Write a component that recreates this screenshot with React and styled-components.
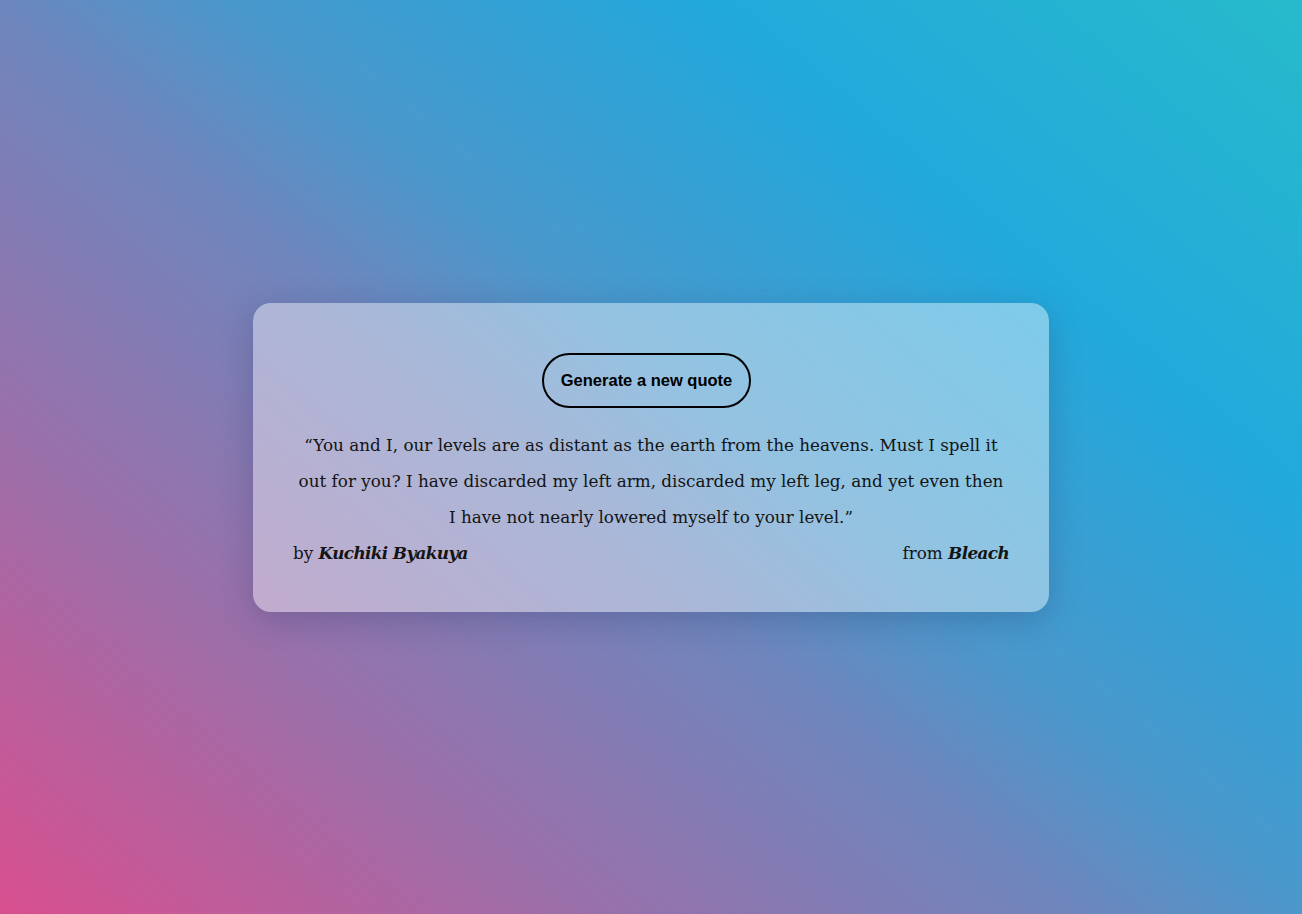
import React from 'react';
import styled, { createGlobalStyle } from 'styled-components';

const GlobalStyle = createGlobalStyle`
  html, body {
    margin: 0;
    padding: 0;
  }
  body {
    font-family: "DejaVu Serif", serif;
  }
`;

const Page = styled.div`
  min-height: 914px;
  width: 100%;
  display: flex;
  align-items: center;
  justify-content: center;
  background: linear-gradient(
    40deg,
    #d94f8f 0%,
    #9d6ea8 23%,
    #6e86bd 45%,
    #4a98cc 55%,
    #22a9dc 75%,
    #27bacb 100%
  );
`;

const Card = styled.div`
  width: 796px;
  box-sizing: border-box;
  padding: 50px 40px 41px;
  border-radius: 18px;
  background: rgba(255, 255, 255, 0.41);
  box-shadow: 0 8px 32px rgba(30, 40, 90, 0.25);
  display: flex;
  flex-direction: column;
  align-items: center;
  color: #141414;
`;

const Button = styled.button`
  height: 55px;
  margin-right: 9px;
  padding: 0 17px;
  border: 2px solid #000;
  border-radius: 28px;
  background: transparent;
  font-family: "Liberation Sans", Arial, sans-serif;
  font-weight: bold;
  font-size: 16.5px;
  color: #000;
  cursor: pointer;
`;

const Quote = styled.p`
  margin: 19px 0 0;
  text-align: center;
  font-size: 16.8px;
  line-height: 36px;
`;

const Footer = styled.div`
  width: 100%;
  display: flex;
  justify-content: space-between;
  font-size: 16.8px;
  line-height: 36px;

  b {
    font-style: italic;
    letter-spacing: -0.6px;
  }
`;

export default function App() {
  return (
    <>
      <GlobalStyle />
      <Page>
        <Card>
          <Button>Generate a new quote</Button>
          <Quote>
            “You and I, our levels are as distant as the earth from the heavens. Must I spell it out for you? I have discarded my left arm, discarded my left leg, and yet even then I have not nearly lowered myself to your level.”
          </Quote>
          <Footer>
            <span>by <b>Kuchiki Byakuya</b></span>
            <span>from <b>Bleach</b></span>
          </Footer>
        </Card>
      </Page>
    </>
  );
}
